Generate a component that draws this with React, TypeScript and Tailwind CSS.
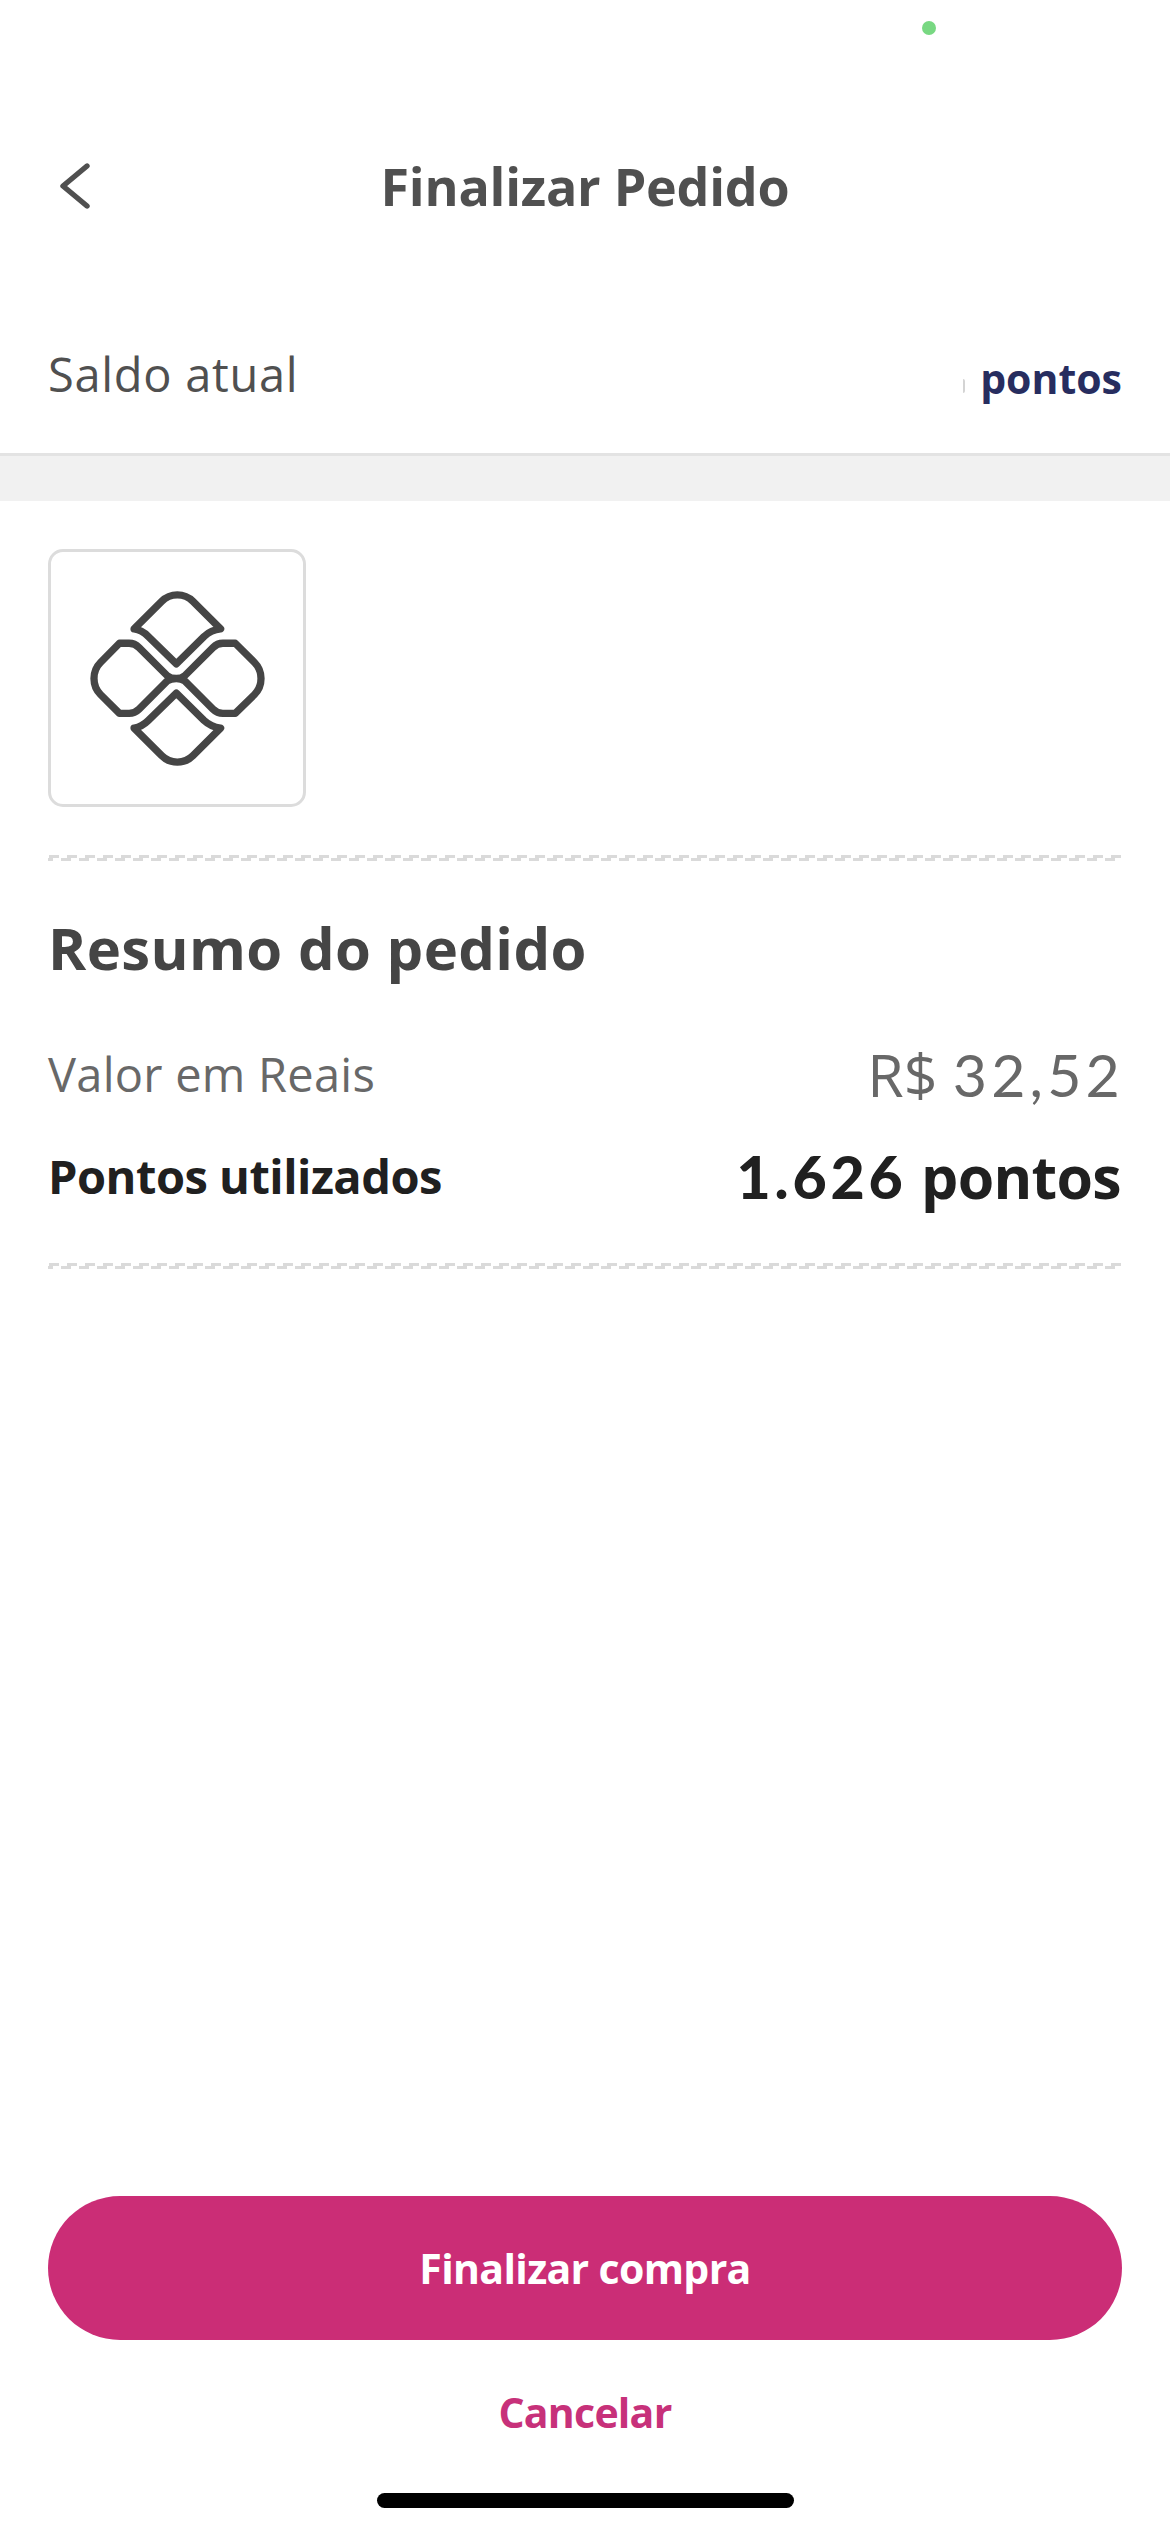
import React from "react";

const BackIcon = () => (
    <svg width="32" height="46" viewBox="0 0 32 46" fill="none">
        <path
            d="M28 3 L4 23 L28 43"
            stroke="#505050"
            strokeWidth="5.4"
            strokeLinecap="round"
            strokeLinejoin="round"
        />
    </svg>
);

const PixIcon = () => (
    <svg
        width="175"
        height="175"
        viewBox="149 151 525 526"
        fill="none"
        stroke="#454545"
        strokeWidth="22"
        strokeLinecap="round"
        strokeLinejoin="round"
    >
        <path d="M281 265 L364 182 C390 156 432 156 458 182 L541 265 C520 267 508 272 491 288 L408 370 L324 288 C309 273 298 267 281 265 Z" />
        <path d="M281 563 L364 646 C390 672 432 672 458 646 L541 563 C520 561 508 556 491 540 L408 458 L324 540 C309 555 298 561 281 563 Z" />
        <path d="M237 308 H266 Q283 308 296 321 L380 405 Q391 414 408 414 Q423 414 434 405 L518 321 Q531 308 548 308 H585 L643 366 C669 392 669 436 643 462 L585 519 H548 Q531 519 518 506 L434 422 Q423 414 408 414 Q391 414 380 422 L296 506 Q283 519 266 519 H237 L180 462 C154 436 154 392 180 366 Z" />
    </svg>
);

const Divider = ({ className }: { className: string }) => (
    <svg className={`block h-1.5 w-full ${className}`} viewBox="0 0 1074 6" fill="none">
        <path d="M1 1.5 H1073" stroke="#dadada" strokeWidth="3" strokeDasharray="10 8" />
        <path
            d="M0 4.5 H1069"
            stroke="#dadada"
            strokeWidth="3"
            strokeDasharray="10 8"
            strokeDashoffset="5"
        />
    </svg>
);

const App = () => {
    return (
        <div className="flex h-[2532px] w-[1170px] flex-col bg-white font-['Open_Sans','Noto_Sans',sans-serif] leading-none">
            <div className="flex h-[132px] items-start justify-end pt-[21px] pr-[234px]">
                <span className="size-3.5 rounded-full bg-[#78d882]" />
            </div>

            <header className="grid h-[108px] grid-cols-[1fr_auto_1fr] items-center px-[59px]">
                <button aria-label="Voltar" className="justify-self-start">
                    <BackIcon />
                </button>
                <h1 className="text-[52px] font-bold tracking-[-0.25px] text-[#505050]">
                    Finalizar Pedido
                </h1>
            </header>

            <div className="mt-[55px] flex h-[158px] items-center justify-between px-12">
                <span className="text-[47px] tracking-[0.7px] text-[#505050]">
                    Saldo atual
                </span>
                <div className="flex items-center gap-[15px] pt-2">
                    <span className="mt-4 h-3.5 w-0.5 rounded-r-full bg-[#d4d4d4]" />
                    <span className="text-[41px] font-bold text-[#272d5f]">pontos</span>
                </div>
            </div>

            <div className="h-12 border-t-[3px] border-[#e3e3e3] bg-[#f1f1f1]" />

            <main className="flex flex-1 flex-col px-12 pt-12">
                <div className="flex size-[258px] items-center justify-center rounded-[15px] border-[3px] border-[#dcdcdc]">
                    <PixIcon />
                </div>

                <Divider className="mt-12" />

                <h2 className="mt-[57px] h-[60px] text-[58px] leading-[60px] font-bold tracking-[0.35px] text-[#454545]">
                    Resumo do pedido
                </h2>

                <div className="mt-[45px] flex h-[102px] items-center justify-between text-[#686868]">
                    <span className="text-[47px] tracking-[0.25px]">Valor em Reais</span>
                    <span className="-mr-0.5 text-[59px]">
                        R${" "}
                        <span className="font-[Lato] tracking-[4.2px]">32,52</span>
                    </span>
                </div>
                <div className="flex h-[102px] items-center justify-between font-bold text-[#202020]">
                    <span className="text-[47px] tracking-[-0.5px]">Pontos utilizados</span>
                    <span className="pr-px text-[59px] tracking-[-0.7px]">
                        <span className="font-[Lato] font-black tracking-[3.8px]">1.626</span> pontos
                    </span>
                </div>

                <Divider className="mt-9" />

                <div className="mt-auto flex flex-col">
                    <button className="h-36 rounded-full bg-[#cb2d76] text-[41px] font-bold tracking-[-0.65px] text-white">
                        Finalizar compra
                    </button>
                    <button className="h-36 text-[41px] font-bold tracking-[-0.75px] text-[#c7317a]">
                        Cancelar
                    </button>
                </div>
            </main>

            <div className="mx-auto mt-[9px] mb-6 h-[15px] w-[417px] rounded-full bg-black" />
        </div>
    );
};

export default App;
